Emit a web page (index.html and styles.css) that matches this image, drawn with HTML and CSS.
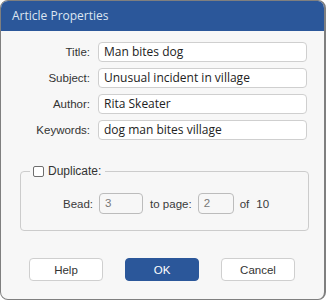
FILE: index.html
```html
<!DOCTYPE html>
<html>
<head>
<meta charset="utf-8">
<link rel="stylesheet" href="styles.css">
</head>
<body>
<div class="window">
  <div class="titlebar">Article Properties</div>
  <div class="content">
    <div class="fields">
      <label class="lbl">Title:</label><div class="field">Man bites dog</div>
      <label class="lbl">Subject:</label><div class="field">Unusual incident in village</div>
      <label class="lbl">Author:</label><div class="field">Rita Skeater</div>
      <label class="lbl">Keywords:</label><div class="field">dog man bites village</div>
    </div>
    <fieldset class="group">
      <legend class="legend"><span class="check"></span><span>Duplicate:</span></legend>
      <div class="beadrow">
        <span class="txt">Bead:</span>
        <div class="num n1">3</div>
        <span class="txt">to page:</span>
        <div class="num n2">2</div>
        <span class="txt of">of</span>
        <span class="txt">10</span>
      </div>
    </fieldset>
    <div class="buttons">
      <button class="btn">Help</button>
      <button class="btn primary">OK</button>
      <button class="btn">Cancel</button>
    </div>
  </div>
</div>
</body>
</html>
```
FILE: styles.css
```css
html, body {
  margin: 0;
  padding: 0;
  background: #ffffff;
}
.window {
  box-sizing: border-box;
  width: 326px;
  height: 300px;
  border: 1px solid #7f7f7f;
  border-right-width: 2px;
  border-radius: 8px;
  overflow: hidden;
  background: #f7f7f7;
  display: flex;
  flex-direction: column;
}
.titlebar {
  height: 30px;
  background: #2b579a;
  color: #dde6f2;
  font-family: "Open Sans", sans-serif;
  font-size: 12px;
  line-height: 30px;
  padding-left: 11px;
}
.content {
  flex: 1;
  display: flex;
  flex-direction: column;
}
.fields {
  display: grid;
  grid-template-columns: 89px 209px;
  column-gap: 8px;
  row-gap: 6px;
  margin-top: 11px;
  align-items: center;
}
.lbl {
  text-align: right;
  font-family: "Liberation Sans", Arial, sans-serif;
  font-size: 11.5px;
  color: #333;
}
.field {
  box-sizing: border-box;
  height: 20px;
  border: 1px solid #cfcfcf;
  border-radius: 4px;
  background: #ffffff;
  font-family: "Open Sans", sans-serif;
  font-size: 12px;
  color: #222;
  line-height: 18px;
  padding-left: 5px;
}
.group {
  box-sizing: border-box;
  margin: 24px 0 0 19px;
  width: 289px;
  height: 67px;
  border: 1px solid #cccccc;
  border-radius: 4px;
  padding: 0;
}
.legend {
  display: flex;
  align-items: center;
  gap: 4px;
  margin-left: 9px;
  padding: 0 4px 0 3px;
  font-family: "Liberation Sans", Arial, sans-serif;
  font-size: 12px;
  color: #333;
}
.check {
  box-sizing: border-box;
  width: 11px;
  height: 11px;
  border: 1px solid #6e6e6e;
  border-radius: 2px;
  background: #fff;
}
.beadrow {
  display: flex;
  align-items: center;
  margin-top: 15px;
  padding-left: 42px;
  font-family: "Liberation Sans", Arial, sans-serif;
  font-size: 11.5px;
  color: #3a3a3a;
}
.txt { color: #3a3a3a; }
.num {
  box-sizing: border-box;
  height: 21px;
  border: 1px solid #bcbcbc;
  border-radius: 4px;
  background: #f7f7f7;
  color: #777;
  font-family: "Liberation Sans", Arial, sans-serif;
  font-size: 11.5px;
  line-height: 19px;
  padding-left: 5px;
}
.n1 { width: 44px; margin: 0 7px 0 6px; }
.n2 { width: 36px; margin: 0 6px 0 6px; }
.of { margin-right: 7px; }
.buttons {
  display: flex;
  gap: 22px;
  margin-top: 27px;
  padding-left: 28px;
}
.btn {
  box-sizing: border-box;
  width: 74px;
  height: 23px;
  border: 1px solid #cfcfcf;
  border-radius: 4px;
  background: #ffffff;
  font-family: "Liberation Sans", Arial, sans-serif;
  font-size: 11.5px;
  color: #333;
  padding: 0;
}
.btn.primary {
  background: #2b579a;
  border-color: #2b579a;
  color: #ffffff;
}
```
